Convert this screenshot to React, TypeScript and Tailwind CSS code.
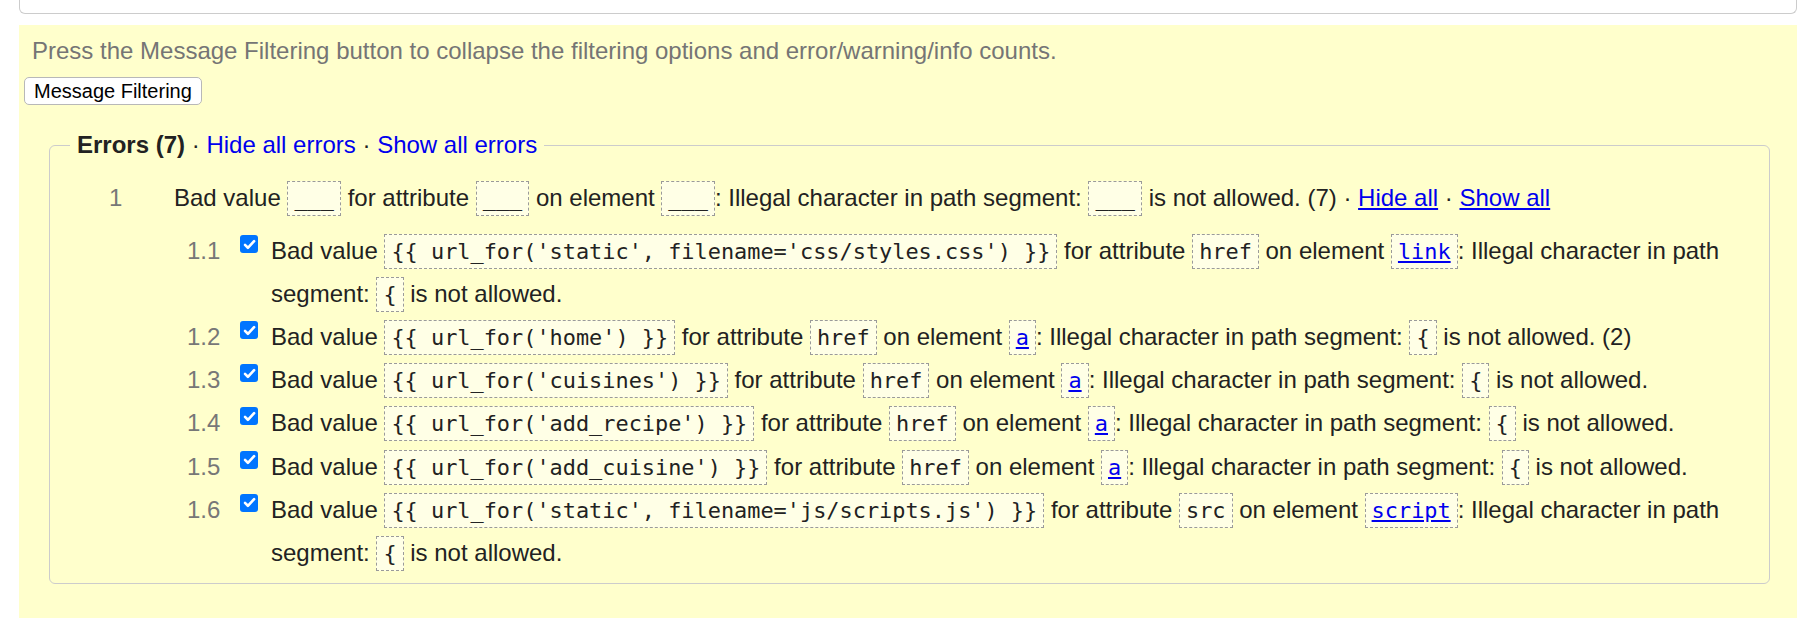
import React from "react";

type Part = string | { code: string; link?: boolean };

const ROWS: { n: string; parts: Part[] }[] = [
  {
    n: "1.1",
    parts: [
      "Bad value ",
      { code: "{{ url_for('static', filename='css/styles.css') }}" },
      " for attribute ",
      { code: "href" },
      " on element ",
      { code: "link", link: true },
      ": Illegal character in path segment: ",
      { code: "{" },
      " is not allowed.",
    ],
  },
  {
    n: "1.2",
    parts: [
      "Bad value ",
      { code: "{{ url_for('home') }}" },
      " for attribute ",
      { code: "href" },
      " on element ",
      { code: "a", link: true },
      ": Illegal character in path segment: ",
      { code: "{" },
      " is not allowed. (2)",
    ],
  },
  {
    n: "1.3",
    parts: [
      "Bad value ",
      { code: "{{ url_for('cuisines') }}" },
      " for attribute ",
      { code: "href" },
      " on element ",
      { code: "a", link: true },
      ": Illegal character in path segment: ",
      { code: "{" },
      " is not allowed.",
    ],
  },
  {
    n: "1.4",
    parts: [
      "Bad value ",
      { code: "{{ url_for('add_recipe') }}" },
      " for attribute ",
      { code: "href" },
      " on element ",
      { code: "a", link: true },
      ": Illegal character in path segment: ",
      { code: "{" },
      " is not allowed.",
    ],
  },
  {
    n: "1.5",
    parts: [
      "Bad value ",
      { code: "{{ url_for('add_cuisine') }}" },
      " for attribute ",
      { code: "href" },
      " on element ",
      { code: "a", link: true },
      ": Illegal character in path segment: ",
      { code: "{" },
      " is not allowed.",
    ],
  },
  {
    n: "1.6",
    parts: [
      "Bad value ",
      { code: "{{ url_for('static', filename='js/scripts.js') }}" },
      " for attribute ",
      { code: "src" },
      " on element ",
      { code: "script", link: true },
      ": Illegal character in path segment: ",
      { code: "{" },
      " is not allowed.",
    ],
  },
];

function Code({ children, link }: { children: string; link?: boolean }) {
  return (
    <code
      className={
        "border border-dashed border-[#9a9a9a] bg-[#ffffe6] px-[6px] py-[4px] font-['DejaVu_Sans_Mono',monospace] text-[21.9px] leading-none whitespace-pre " +
        (link ? "text-[#0000ee] underline" : "text-[#222]")
      }
    >
      {children}
    </code>
  );
}

function Message({ parts }: { parts: Part[] }) {
  return (
    <p>
      {parts.map((p, i) =>
        typeof p === "string" ? (
          <React.Fragment key={i}>{p}</React.Fragment>
        ) : (
          <Code key={i} link={p.link}>
            {p.code}
          </Code>
        )
      )}
    </p>
  );
}

function Check() {
  return (
    <span className="mt-[6px] flex h-[18px] w-[18px] items-center justify-center rounded-[3px] bg-[#0075ff]">
      <svg viewBox="0 0 16 16" className="h-[15px] w-[15px]">
        <path
          d="M3.2 8.4l3.1 3.1L12.9 4.5"
          fill="none"
          stroke="white"
          strokeWidth="2.8"
          strokeLinecap="round"
          strokeLinejoin="round"
        />
      </svg>
    </span>
  );
}

export default function App() {
  return (
    <div className="min-h-screen bg-white font-['Liberation_Sans',Arial,sans-serif] text-[24px] text-[#222]">
      <div className="ml-[19px] h-[14px] rounded-b-[6px] border-x border-b border-[#cccccc] bg-white" />
      <div className="ml-[19px] mt-[11px] bg-[#ffffcc] pb-[34px] pt-[12px]">
        <p className="ml-[13px] leading-[28px] text-[#757575]">
          Press the Message Filtering button to collapse the filtering options and error/warning/info counts.
        </p>
        <button className="ml-[5px] mt-[12px] rounded-[5px] border border-[#b8b8b8] bg-white px-[9px] text-[20px] leading-[26px] text-black">
          Message Filtering
        </button>
        <fieldset className="ml-[30px] mr-[27px] mt-[23px] rounded-[6px] border border-[#cccccc] pb-[9px] pl-[20px] pr-[19px] pt-[17px]">
          <legend className="px-[7px] leading-[28px]">
            <span className="font-bold">Errors (7)</span> ·{" "}
            <a className="text-[#0000ee]">Hide all errors</a> ·{" "}
            <a className="text-[#0000ee]">Show all errors</a>
          </legend>
          <div className="pl-[39px] leading-[43.1px]">
            <div className="grid grid-cols-[65px_1fr]">
              <span className="text-[#777]">1</span>
              <p>
                Bad value <Code>___</Code> for attribute <Code>___</Code> on element <Code>___</Code>: Illegal character
                in path segment: <Code>___</Code> is not allowed. (7) ·{" "}
                <a className="text-[#0000ee] underline">Hide all</a> ·{" "}
                <a className="text-[#0000ee] underline">Show all</a>
              </p>
            </div>
            <div className="ml-[78px] mt-[10px] flex flex-col">
              {ROWS.map((r) => (
                <div key={r.n} className="grid grid-cols-[53px_31px_1fr]">
                  <span className="text-[#777]">{r.n}</span>
                  <Check />
                  <Message parts={r.parts} />
                </div>
              ))}
            </div>
          </div>
        </fieldset>
      </div>
    </div>
  );
}
